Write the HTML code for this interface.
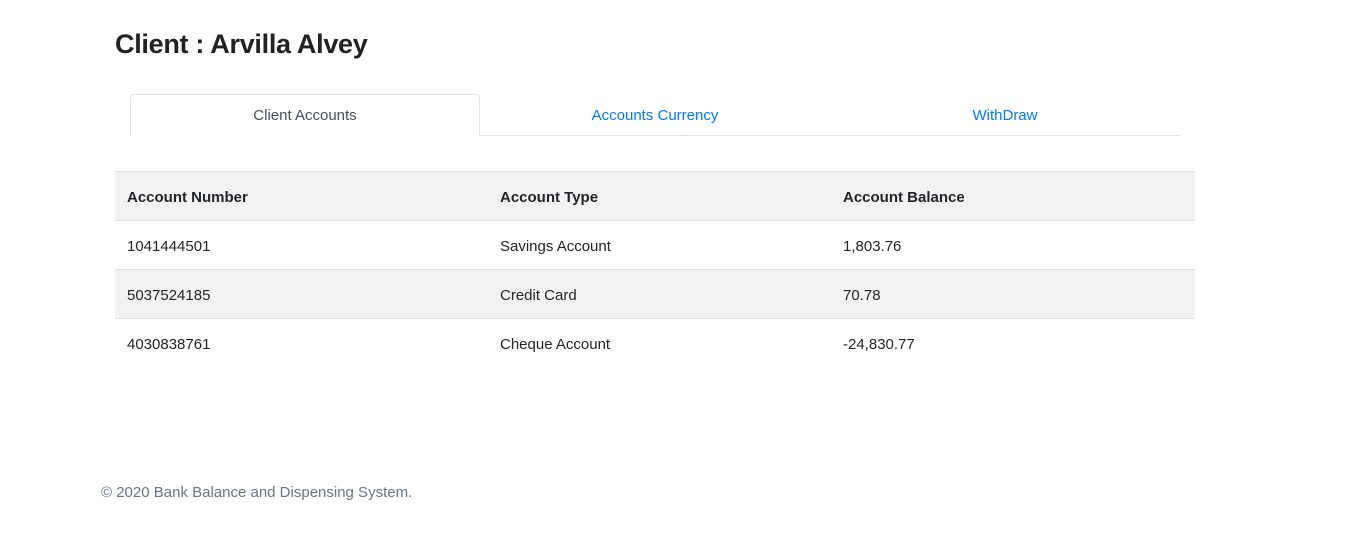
<!DOCTYPE html>
<html><head><meta charset="utf-8"><style>
body{margin:0;width:1352px;height:553px;background:#fff;font-family:"Liberation Sans",sans-serif;color:#212529;position:relative;overflow:hidden}
h2{position:absolute;left:115px;top:29px;margin:0;font-size:27px;font-weight:bold;color:#222;letter-spacing:-0.3px}
.tabs{position:absolute;left:130px;top:94px;width:1050px;height:41px;border-bottom:1px solid #dee2e6}
.tab{position:absolute;top:0;width:350px;height:41px;line-height:44px;text-align:center;font-size:15px;color:#007bff;box-sizing:border-box}
.tab.a{border:1px solid #dee2e6;border-bottom:1px solid #fff;border-radius:4px 4px 0 0;color:#495057;height:42px;line-height:42px}
table{position:absolute;left:115px;top:171px;width:1080px;border-collapse:collapse;font-size:15px}
td,th{height:49px;padding:2px 12px 0;text-align:left;border-top:1px solid #dee2e6;box-sizing:border-box}
th{background:#f2f2f2;font-weight:bold;border-bottom:1px solid #dee2e6}
tr.g td{background:#f2f2f2}
.f{position:absolute;left:101px;top:484px;font-size:15px;color:#6c757d}
</style></head><body>
<h2>Client : Arvilla Alvey</h2>
<div class="tabs">
<div class="tab a" style="left:0">Client Accounts</div>
<div class="tab" style="left:350px">Accounts Currency</div>
<div class="tab" style="left:700px">WithDraw</div>
</div>
<table>
<tr><th style="width:373px">Account Number</th><th style="width:343px">Account Type</th><th>Account Balance</th></tr>
<tr><td>1041444501</td><td>Savings Account</td><td>1,803.76</td></tr>
<tr class="g"><td>5037524185</td><td>Credit Card</td><td>70.78</td></tr>
<tr><td>4030838761</td><td>Cheque Account</td><td>-24,830.77</td></tr>
</table>
<div class="f">© 2020 Bank Balance and Dispensing System.</div>
</body></html>
